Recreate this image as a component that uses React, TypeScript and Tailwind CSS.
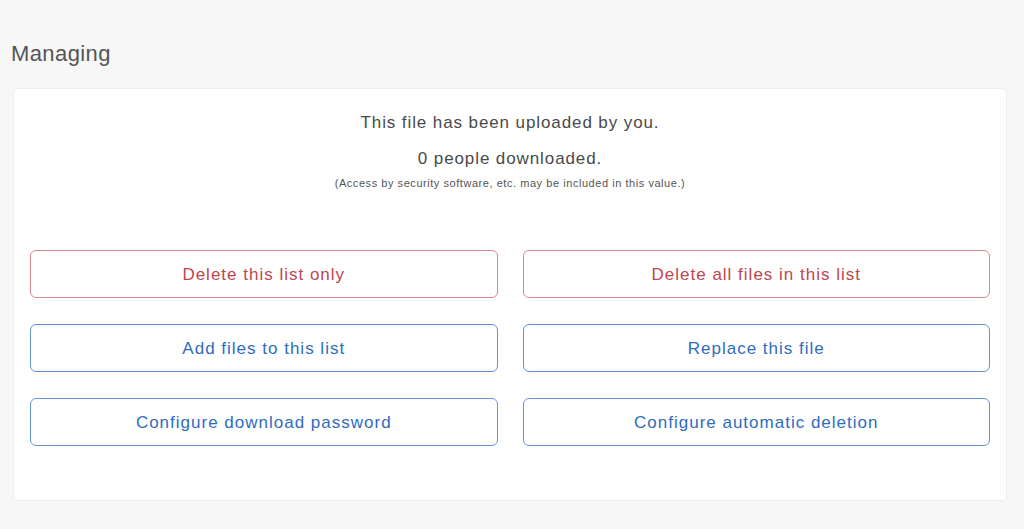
const buttons = [
  { label: "Delete this list only", tone: "red" },
  { label: "Delete all files in this list", tone: "red" },
  { label: "Add files to this list", tone: "blue" },
  { label: "Replace this file", tone: "blue" },
  { label: "Configure download password", tone: "blue" },
  { label: "Configure automatic deletion", tone: "blue" },
];

export default function App() {
  return (
    <div
      className="min-h-[529px] bg-[#f7f7f7] px-[13px] pt-[40px] pb-[28px] text-[#444]"
      style={{ fontFamily: '"Liberation Sans", "Noto Sans CJK JP", sans-serif' }}
    >
      <h2 className="ml-[-2px] text-[22px] leading-[28px] tracking-[0.4px] text-[#555]">Managing</h2>

      <div className="mt-[20px] mr-[4px] rounded-[4px] border border-[#eeeeee] bg-white px-[16px] pt-[22px] pb-[54px]">
        <div className="flex flex-col items-center text-center">
          <p className="text-[17px] leading-[24px] tracking-[0.9px] text-[#4a4a4a]">This file has been uploaded by you.</p>
          <p className="mt-[12px] text-[17px] leading-[24px] tracking-[0.9px] text-[#4a4a4a]">0 people downloaded.</p>
          <p className="mt-[5px] text-[11px] leading-[14px] tracking-[0.55px] text-[#555]">
            (Access by security software, etc. may be included in this value.)
          </p>
        </div>

        <div className="mt-[60px] grid grid-cols-2 gap-x-[25px] gap-y-[26px]">
          {buttons.map((b) => (
            <button
              key={b.label}
              className={
                b.tone === "red"
                  ? "h-[48px] rounded-[6px] border border-[#d98891] bg-white pt-[2px] text-[17px] tracking-[1px] text-[#c0454f]"
                  : "h-[48px] rounded-[6px] border border-[#6495d3] bg-white pt-[2px] text-[17px] tracking-[1px] text-[#2f6cc0]"
              }
            >
              {b.label}
            </button>
          ))}
        </div>
      </div>
    </div>
  );
}
